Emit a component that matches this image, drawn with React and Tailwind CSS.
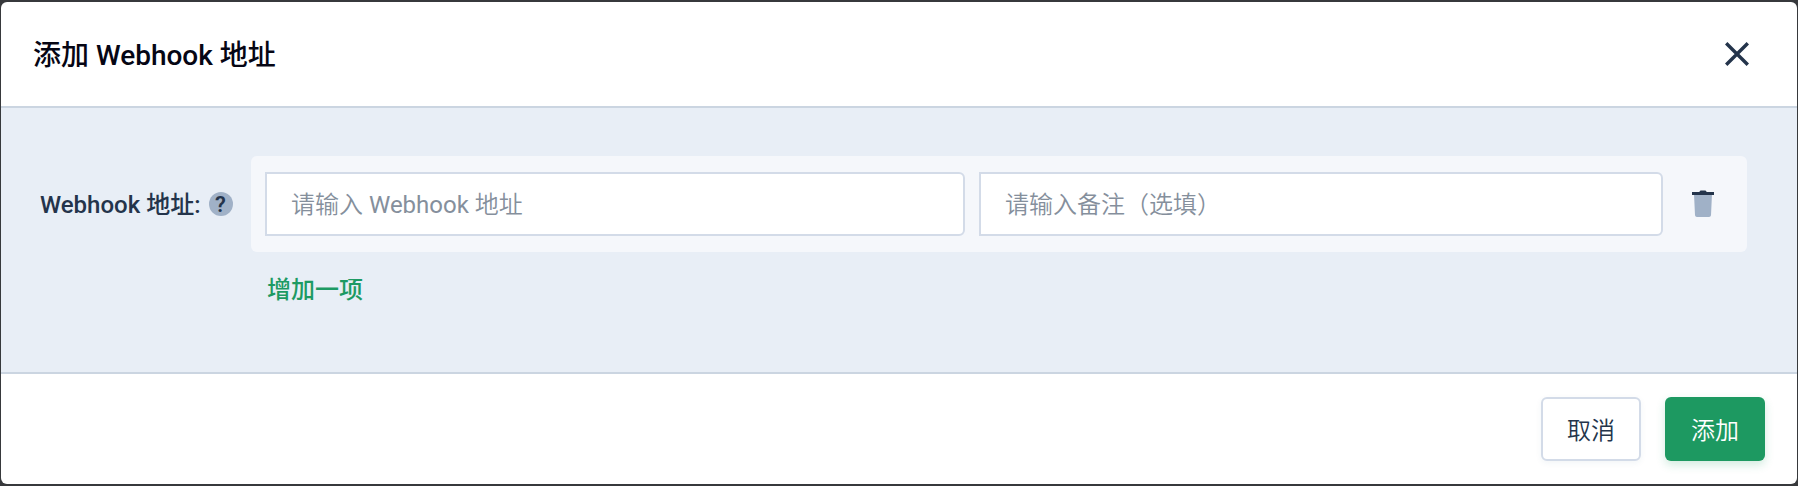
import React from "react";

function CloseIcon() {
  return (
    <svg className="h-6 w-6" viewBox="0 0 24 24" fill="none" stroke="#24344b" strokeWidth="3.4">
      <path d="M1.2 1.2 22.8 22.8M22.8 1.2 1.2 22.8" />
    </svg>
  );
}

function TrashIcon() {
  return (
    <svg className="h-7 w-[22px]" viewBox="0 0 22 28">
      <path d="M2 4h18l-1 21.2a2 2 0 0 1-2 1.8H5a2 2 0 0 1-2-1.8z" fill="#a0b1c7" />
      <path d="M0 2h7.2L8.5.5h5L14.8 2H22v3H0z" fill="#24344b" />
    </svg>
  );
}

function Field({ placeholder, className }) {
  return (
    <input
      type="text"
      placeholder={placeholder}
      className={`h-16 rounded-r-md border-2 border-[#d3dbe8] bg-white pt-0.5 pl-6 font-[Roboto,'Noto_Sans_CJK_SC_DemiLight','Noto_Sans_CJK_SC',sans-serif] text-2xl font-normal text-[#24344b] outline-none placeholder:text-[#858f9c] ${className}`}
    />
  );
}

export default function App() {
  return (
    <div className="h-[486px] w-[1798px] bg-[#37393c] px-px py-0.5 font-[Roboto,'Noto_Sans_CJK_SC',sans-serif]">
      <div role="dialog" className="flex h-[482px] flex-col overflow-hidden rounded-md bg-white">
        <header className="flex h-[106px] items-center justify-between border-b-2 border-[#cbd5e1] pr-12 pl-8">
          <h1 className="pt-1 text-[28px] leading-10 font-medium text-[#060614]">添加 Webhook 地址</h1>
          <button type="button" aria-label="关闭"><CloseIcon /></button>
        </header>
        <main className="flex flex-1 items-start bg-[#e8eef6] pt-12 pr-[50px]">
          <div className="flex h-24 w-[250px] items-center pl-[39px] text-2xl font-medium text-[#24344b]">
            <span className="pt-0.5">Webhook 地址:</span>
            <span className="ml-2 flex h-6 w-6 items-center justify-center rounded-full bg-[#a0b1c7] pt-px text-[22px] leading-6 font-semibold">?</span>
          </div>
          <div className="flex-1">
            <div className="flex h-24 items-center rounded-md bg-[#f5f7fb] pl-3.5">
              <Field placeholder="请输入 Webhook 地址" className="w-[700px]" />
              <Field placeholder="请输入备注（选填）" className="ml-3.5 w-[684px]" />
              <button type="button" aria-label="删除" className="ml-[29px]"><TrashIcon /></button>
            </div>
            <button type="button" className="mt-5 ml-4 block text-2xl leading-9 font-medium text-[#1d9a63]">增加一项</button>
          </div>
        </main>
        <footer className="flex h-28 justify-end gap-6 border-t-2 border-[#cbd5e1] pt-[23px] pr-8 text-2xl font-[350]">
          <button type="button" className="h-16 w-[100px] rounded-md border-2 border-[#d3dbe8] bg-white pt-1 text-[#24344b] shadow-[0_2px_6px_rgba(36,80,120,0.06)]">取消</button>
          <button type="button" className="h-16 w-[100px] rounded-md bg-[#1d9961] pt-1 text-white shadow-[0_4px_10px_rgba(29,153,97,0.2)]">添加</button>
        </footer>
      </div>
    </div>
  );
}
